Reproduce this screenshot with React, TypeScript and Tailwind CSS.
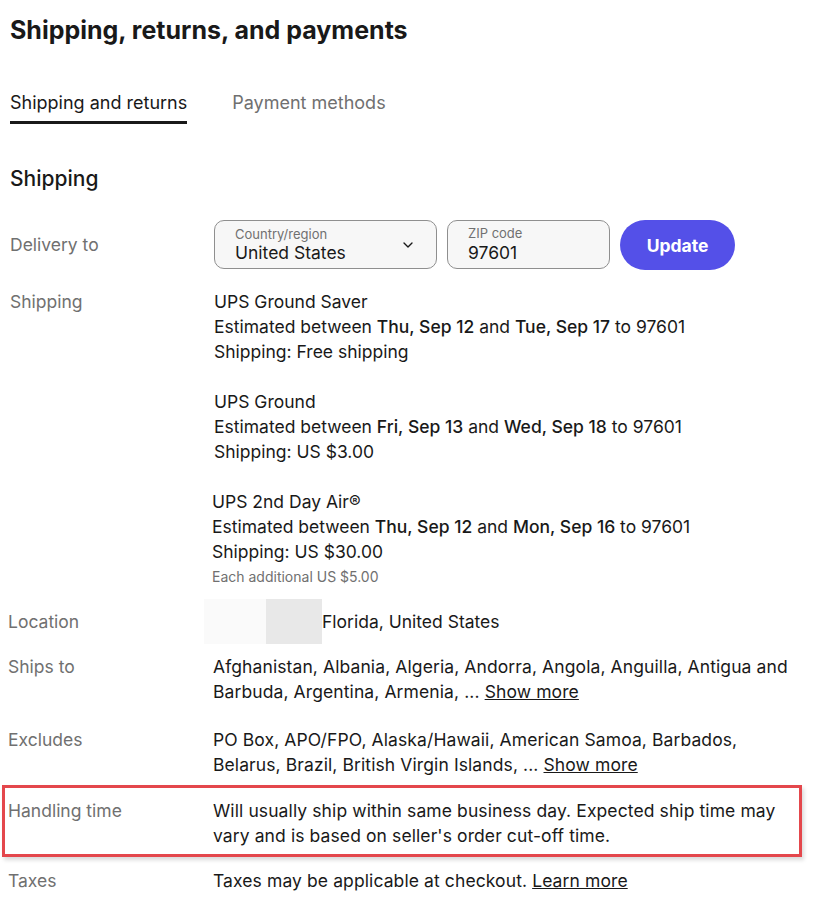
import { ChevronDown } from 'lucide-react'

const rows = [
  {
    label: 'Ships to',
    text: 'Afghanistan, Albania, Algeria, Andorra, Angola, Anguilla, Antigua and Barbuda, Argentina, Armenia, ... ',
    link: 'Show more',
  },
  {
    label: 'Excludes',
    text: 'PO Box, APO/FPO, Alaska/Hawaii, American Samoa, Barbados, Belarus, Brazil, British Virgin Islands, ... ',
    link: 'Show more',
  },
]

type Service = {
  name: string
  from: string
  to: string
  cost: string
  extra?: string
}

const services: Service[] = [
  { name: 'UPS Ground Saver', from: 'Thu, Sep 12', to: 'Tue, Sep 17', cost: 'Free shipping' },
  { name: 'UPS Ground', from: 'Fri, Sep 13', to: 'Wed, Sep 18', cost: 'US $3.00' },
  { name: 'UPS 2nd Day Air®', from: 'Thu, Sep 12', to: 'Mon, Sep 16', cost: 'US $30.00', extra: 'Each additional US $5.00' },
]

function ServiceBlock({ s, shift }: { s: Service; shift?: boolean }) {
  return (
    <div className={shift ? '-ml-[2px]' : ''}>
      <div>{s.name}</div>
      <div>
        Estimated between <span className="font-medium">{s.from}</span> and{' '}
        <span className="font-medium">{s.to}</span> to 97601
      </div>
      <div>Shipping: {s.cost}</div>
      {s.extra && <div className="mt-[2px] text-[14px] leading-[22px] text-[#707070]">{s.extra}</div>}
    </div>
  )
}

export default function App() {
  return (
    <div className="h-[920px] w-[822px] overflow-hidden bg-white font-['Inter',sans-serif] text-[17.5px] leading-[25px] text-[#191919]">
      <div className="px-[10px]">
        <h1 className="pt-[15px] text-[25px] font-bold leading-[30px]">Shipping, returns, and payments</h1>

        <div className="mt-[46px] flex gap-[45px] text-[18px] leading-[24px]">
          <div className="border-b-[3px] border-[#191919] pb-[6px]">Shipping and returns</div>
          <div className="text-[#707070]">Payment methods</div>
        </div>

        <h2 className="mt-[41px] text-[21px] font-medium leading-[28px]">Shipping</h2>

        <div className="mt-[27px] grid grid-cols-[204px_1fr] items-center">
          <div className="-mt-[2px] text-[#707070]">Delivery to</div>
          <div className="flex gap-[10px]">
            <div className="flex h-[49px] w-[223px] items-center justify-between rounded-[10px] border border-[#8f8f8f] bg-[#f7f7f7] pl-[20px] pr-[20px]">
              <div className="flex flex-col">
                <span className="text-[13px] leading-[15px] text-[#707070]">Country/region</span>
                <span className="leading-[21px]">United States</span>
              </div>
              <ChevronDown size={16} strokeWidth={2} className="text-[#191919]" />
            </div>
            <div className="flex h-[49px] w-[163px] flex-col justify-center rounded-[10px] border border-[#8f8f8f] bg-[#f7f7f7] pl-[20px]">
              <span className="text-[13px] leading-[15px] text-[#707070]">ZIP code</span>
              <span className="leading-[23px]">97601</span>
            </div>
            <button className="h-[50px] w-[115px] rounded-full bg-[#5450e8] text-[17.5px] font-bold text-white">
              Update
            </button>
          </div>
        </div>

        <div className="mt-[19px] grid grid-cols-[204px_1fr]">
          <div className="text-[#707070]">Shipping</div>
          <div className="flex flex-col gap-[25px]">
            {services.map((s, i) => (
              <ServiceBlock key={s.name} s={s} shift={i === 2} />
            ))}
          </div>
        </div>
      </div>

      <div className="px-[8px]">
        <div className="mt-[21px] grid grid-cols-[205px_1fr]">
          <div className="text-[#707070]">Location</div>
          <div className="flex items-center">
            <div className="-my-[10px] -ml-[9px] flex">
              <div className="h-[45px] w-[62px] bg-[#fafafa]" />
              <div className="h-[45px] w-[56px] bg-[#e8e8e8]" />
            </div>
            <span>Florida, United States</span>
          </div>
        </div>

        <div className="mt-[20px] flex flex-col gap-[23px]">
          {rows.map((r) => (
            <div key={r.label} className="grid grid-cols-[205px_1fr]">
              <div className="text-[#707070]">{r.label}</div>
              <div className="max-w-[585px] tracking-[0.1px]">
                {r.text}
                <span className="underline">{r.link}</span>
              </div>
            </div>
          ))}
        </div>
      </div>

      <div className="mx-[2px] mt-[8px] w-[800px] border-[3px] border-[#e4474c] pb-[6px] pl-[3px] pt-[10px] shadow-[2px_3px_4px_rgba(0,0,0,0.15)]">
        <div className="grid grid-cols-[205px_1fr]">
          <div className="text-[#707070]">Handling time</div>
          <div className="max-w-[585px] tracking-[0.1px]">
            Will usually ship within same business day. Expected ship time may vary and is based on seller's order
            cut-off time.
          </div>
        </div>
      </div>

      <div className="mt-[11px] grid grid-cols-[205px_1fr] px-[8px]">
        <div className="text-[#707070]">Taxes</div>
        <div className="tracking-[0.1px]">
          Taxes may be applicable at checkout. <span className="underline">Learn more</span>
        </div>
      </div>
    </div>
  )
}
